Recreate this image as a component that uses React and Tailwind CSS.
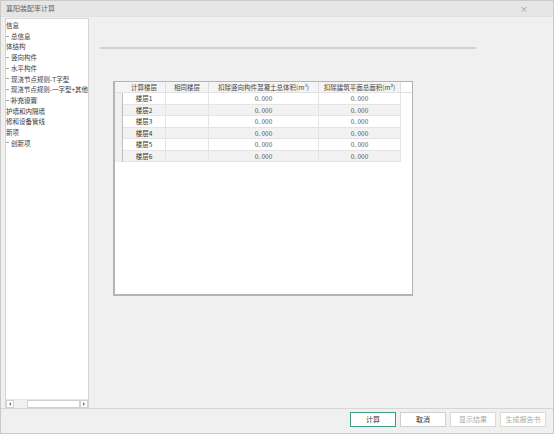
import React from 'react';

const tree = [
  { t: '信息', d: 0 },
  { t: '总信息', d: 1 },
  { t: '体结构', d: 0 },
  { t: '竖向构件', d: 1 },
  { t: '水平构件', d: 1 },
  { t: '现浇节点规则-T字型', d: 1 },
  { t: '现浇节点规则-一字型+其他', d: 1 },
  { t: '补充设置', d: 1, sel: true },
  { t: '护墙和内隔墙', d: 0 },
  { t: '修和设备管线', d: 0 },
  { t: '新项', d: 0 },
  { t: '创新项', d: 1 },
];

const rows = ['楼层1', '楼层2', '楼层3', '楼层4', '楼层5', '楼层6'];

export default function App() {
  return (
    <div
      className="w-[554px] h-[434px] flex flex-col bg-[#f0f0f0] border border-[#c9c9c9] text-[#333] overflow-hidden"
      style={{ fontFamily: '"Noto Sans CJK SC", "Liberation Sans", sans-serif' }}
    >
      {/* Title bar */}
      <div className="h-[16px] shrink-0 flex items-center justify-between bg-[#e6e6e6] pl-[5px] pr-[25px] border-b border-[#e0e0e0]">
        <span className="text-[7px] text-[#666] leading-none">襄阳装配率计算</span>
        <span className="text-[8px] text-[#999] leading-none">×</span>
      </div>

      {/* Body */}
      <div className="flex-1 flex min-h-0 pt-[1px]">
        {/* Tree panel */}
        <div className="ml-[4px] w-[84px] flex flex-col bg-white border border-[#d4d4d4] border-b-0">
          <div className="flex-1 pt-[1px] overflow-hidden">
            {tree.map((n, i) => (
              <div key={i} className="h-[10.7px] flex items-center whitespace-nowrap text-[6.5px] leading-none text-[#3a3a3a]">
                {n.d === 1 && <span className="w-[3px] h-px bg-[#aaa] mr-[1px]" />}
                <span className={n.d === 1 ? 'pl-[1px] ' + (n.sel ? 'bg-[#e8eef5] pr-[1px]' : '') : ''}>{n.t}</span>
              </div>
            ))}
          </div>
          {/* Horizontal scrollbar */}
          <div className="h-[9px] flex items-stretch border-t border-[#e6e6e6] bg-[#f0f0f0]">
            <div className="w-[8px] flex items-center justify-center bg-white border border-[#d0d0d0]">
              <span className="w-0 h-0 border-y-[2px] border-y-transparent border-r-[2px] border-r-[#777]" />
            </div>
            <div className="w-[13px]" />
            <div className="flex-1 bg-white border border-[#d0d0d0]" />
            <div className="w-[8px] flex items-center justify-center bg-white border border-[#d0d0d0]">
              <span className="w-0 h-0 border-y-[2px] border-y-transparent border-l-[2px] border-l-[#777]" />
            </div>
          </div>
        </div>

        {/* Right area */}
        <div className="flex-1 flex flex-col">
          <div className="ml-[11px] mt-[29px] w-[376px] h-[2px] bg-[#d2d2d2]" />
          <div className="ml-[24px] mt-[32px] w-[300px] h-[215px] bg-white border border-[#b4b4b4] border-b-2 border-l-2 flex flex-col text-[6.5px] leading-none">
            {/* Header */}
            <div className="h-[11px] flex bg-[#f4f4f4] border-b border-[#e2e2e2] text-[#444]">
              <div className="w-[8px]" />
              <div className="w-[43px] flex items-center justify-center border-r border-[#dedede]">计算楼层</div>
              <div className="w-[43px] flex items-center justify-center border-r border-[#dedede]">相同楼层</div>
              <div className="w-[110px] flex items-center justify-center border-r border-[#dedede]">扣除竖向构件混凝土总体积(m³)</div>
              <div className="w-[82px] flex items-center justify-center border-r border-[#dedede]">扣除建筑平面总面积(m²)</div>
              <div className="flex-1 bg-white" />
            </div>
            {rows.map((r, i) => (
              <div key={r} className="h-[11.5px] flex">
                <div className="w-[8px] bg-[#f0f0f0] border-r border-[#bdbdbd]" />
                <div className={'w-[43px] flex items-center justify-center border-r border-b border-[#e4e4e4] ' + (i % 2 ? 'bg-[#f2f2f2]' : 'bg-white')}>{r}</div>
                <div className={'w-[43px] border-r border-b border-[#e4e4e4] ' + (i % 2 ? 'bg-[#f2f2f2]' : 'bg-white')} />
                <div className={'w-[110px] flex items-center justify-center border-r border-b border-[#e4e4e4] text-[#555] ' + (i % 2 ? 'bg-[#f2f2f2]' : 'bg-white')}>0. 000</div>
                <div className={'w-[82px] flex items-center justify-center border-r border-b border-[#e4e4e4] text-[#555] ' + (i % 2 ? 'bg-[#f2f2f2]' : 'bg-white')}>0. 000</div>
              </div>
            ))}
          </div>
        </div>
      </div>

      {/* Bottom bar */}
      <div className="h-[25px] shrink-0 border-t border-[#d6d6d6] flex items-start justify-end gap-[4px] pr-[7px] pt-[3px] text-[7px] leading-none">
        <button className="w-[46px] h-[15px] bg-white border border-[#3d9b84] text-[#333]">计算</button>
        <button className="w-[46px] h-[15px] bg-white border border-[#cfcfcf] text-[#333]">取消</button>
        <button className="w-[46px] h-[15px] bg-white border border-[#dadada] text-[#aaa]">显示结果</button>
        <button className="w-[46px] h-[15px] bg-white border border-[#dadada] text-[#aaa]">生成报告书</button>
      </div>
    </div>
  );
}
